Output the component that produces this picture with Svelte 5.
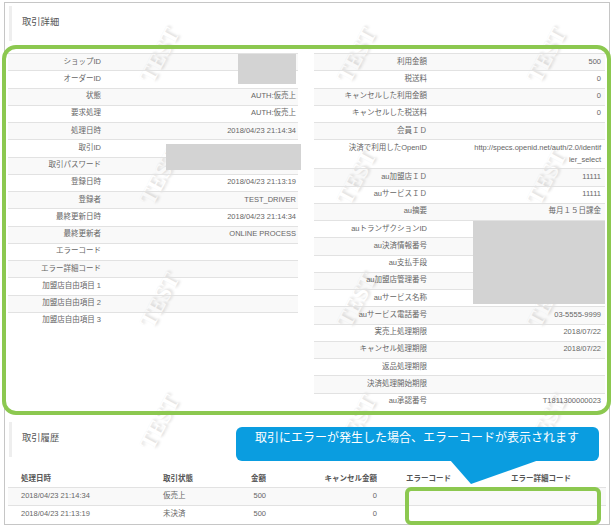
<script>
	const left = [
		['ショップID', ''],
		['オーダーID', ''],
		['状態', 'AUTH:仮売上'],
		['要求処理', 'AUTH:仮売上'],
		['処理日時', '2018/04/23 21:14:34'],
		['取引ID', ''],
		['取引パスワード', ''],
		['登録日時', '2018/04/23 21:13:19'],
		['登録者', 'TEST_DRIVER'],
		['最終更新日時', '2018/04/23 21:14:34'],
		['最終更新者', 'ONLINE PROCESS'],
		['エラーコード', ''],
		['エラー詳細コード', ''],
		['加盟店自由項目 1', ''],
		['加盟店自由項目 2', ''],
		['加盟店自由項目 3', '']
	];
	const right = [
		['利用金額', '500'],
		['税送料', '0'],
		['キャンセルした利用金額', '0'],
		['キャンセルした税送料', '0'],
		['会員ＩＤ', ''],
		['決済で利用したOpenID', 'http://specs.openid.net/auth/2.0/identifier_select'],
		['au加盟店ＩＤ', '11111'],
		['auサービスＩＤ', '11111'],
		['au摘要', '毎月１５日課金'],
		['auトランザクションID', ''],
		['au決済情報番号', ''],
		['au支払手段', ''],
		['au加盟店管理番号', ''],
		['auサービス名称', ''],
		['auサービス電話番号', '03-5555-9999'],
		['実売上処理期限', '2018/07/22'],
		['キャンセル処理期限', '2018/07/22'],
		['返品処理期限', ''],
		['決済処理開始期限', ''],
		['au承認番号', 'T1811300000023']
	];
	const history = [
		['2018/04/23 21:14:34', '仮売上', '500', '0'],
		['2018/04/23 21:13:19', '未決済', '500', '0']
	];
	const marks = [];
	for (const x of [125, 322, 512]) {
		for (const y of [41, 163, 286, 408]) marks.push({ x, y });
	}
</script>

<div class="panel">
	<div class="marks">
		{#each marks as m}
			<span class="mark" style="left: {m.x}px; top: {m.y}px">TEST</span>
		{/each}
	</div>

	<h2>取引詳細</h2>
	<div class="columns">
		<div class="kv kv-left">
			{#each left as [k, v]}
				<div class="row"><div class="k">{k}</div><div class="v">{v}</div></div>
			{/each}
		</div>
		<div class="kv kv-right">
			{#each right as [k, v]}
				<div class="row"><div class="k">{k}</div><div class="v">{v}</div></div>
			{/each}
		</div>
	</div>

	<h2 class="second">取引履歴</h2>
	<table>
		<thead>
			<tr>
				<th class="c1">処理日時</th>
				<th class="c2">取引状態</th>
				<th class="c3">金額</th>
				<th class="c4">キャンセル金額</th>
				<th class="c5">エラーコード</th>
				<th class="c6">エラー詳細コード</th>
			</tr>
		</thead>
		<tbody>
			{#each history as h}
				<tr>
					<td class="c1">{h[0]}</td>
					<td class="c2">{h[1]}</td>
					<td class="c3">{h[2]}</td>
					<td class="c4">{h[3]}</td>
					<td class="c5"></td>
					<td class="c6"></td>
				</tr>
			{/each}
		</tbody>
	</table>
</div>

<div class="mask m1"></div>
<div class="mask m2"></div>
<div class="mask m3"></div>

<div class="frame big"></div>
<div class="frame small"></div>

<div class="callout">取引にエラーが発生した場合、エラーコードが表示されます</div>
<svg class="tail" width="100" height="26" viewBox="0 0 100 26"><polygon points="0,0 21,24 89,0" fill="#0a9de0" /></svg>

<style>
	:global(body) {
		margin: 0;
		background: #fff;
		overflow: hidden;
	}

	:global(#app) {
		position: relative;
		width: 613px;
		height: 530px;
		overflow: hidden;
		font-family: "Liberation Sans", "Noto Sans CJK JP", sans-serif;
		font-size: 7.5px;
		color: #666;
	}

	.panel {
		position: relative;
		box-sizing: border-box;
		width: 606px;
		height: 523px;
		margin: 2px 0 0 4px;
		padding: 3px 3px 0;
		border: 1px solid #c6c6c6;
		background: #fff;
	}

	.marks {
		position: absolute;
		inset: 0;
		overflow: hidden;
	}

	.mark {
		position: absolute;
		font-family: "Liberation Serif", serif;
		font-weight: bold;
		font-size: 23px;
		line-height: 1;
		color: #fff;
		text-shadow: 1px 1px 2px #e4e4e4, 2px 2px 3px #e0e0e0;
		transform: rotate(-62deg);
	}

	h2 {
		position: relative;
		box-sizing: border-box;
		height: 35px;
		margin: 0 0 12px 1px;
		padding: 0 0 2px 10px;
		border-left: 3px solid #eee;
		font-size: 9.3px;
		font-weight: normal;
		line-height: 33px;
		color: #555;
	}

	.second {
		margin-bottom: 0;
	}

	.columns {
		position: relative;
		display: flex;
		gap: 16px;
		height: 357px;
		margin-bottom: 12px;
	}

	.kv {
		width: 290px;
	}

	.kv-right {
		width: 291px;
	}

	.row {
		display: grid;
		box-sizing: border-box;
		min-height: 17.25px;
		border-top: 1px solid #e2e2e2;
		line-height: 12px;
		padding: 1.5px 0 2.5px;
	}

	.row:nth-child(odd) {
		background: rgba(0, 0, 0, 0.025);
	}

	.kv-left .row {
		grid-template-columns: 93px 1fr;
	}

	.kv-right .row {
		grid-template-columns: 113px 1fr;
	}

	.k {
		text-align: right;
	}

	.v {
		text-align: right;
		word-break: break-all;
		padding-left: 46px;
	}

	.kv-left .v {
		padding-right: 2px;
	}

	.kv-right .v {
		padding-right: 4px;
	}

	table {
		position: relative;
		width: 598px;
		margin: 0;
		border-collapse: collapse;
		table-layout: fixed;
	}

	th {
		height: 30px;
		padding: 11px 0 0;
		font-weight: bold;
		font-size: 7.5px;
		color: #555;
		box-sizing: border-box;
	}

	td {
		height: 17px;
		padding: 0;
		border-top: 1px solid #e2e2e2;
		line-height: 10px;
	}

	tbody tr:nth-child(odd) {
		background: rgba(0, 0, 0, 0.025);
	}

	.c1 { width: 155px; padding-left: 13px; text-align: left; box-sizing: border-box; }
	.c2 { width: 65px; text-align: left; }
	.c3 { width: 38px; text-align: right; }
	.c4 { width: 111px; text-align: right; }
	.c5 { width: 74px; text-align: right; }
	.c6 { text-align: right; padding-right: 35px; box-sizing: border-box; }

	.mask {
		position: absolute;
		background: #d3d3d3;
	}

	.m1 { left: 238px; top: 54px; width: 58px; height: 30px; }
	.m2 { left: 166px; top: 144px; width: 135px; height: 26px; }
	.m3 { left: 473px; top: 221px; width: 132px; height: 83px; }

	.frame {
		position: absolute;
		box-sizing: border-box;
		border: 4px solid #8cc850;
	}

	.big {
		left: 2px;
		top: 45px;
		width: 609px;
		height: 370px;
		border-radius: 14px;
	}

	.small {
		left: 405px;
		top: 487px;
		width: 196px;
		height: 38px;
		border-radius: 6px;
	}

	.callout {
		position: absolute;
		box-sizing: border-box;
		left: 236px;
		top: 427px;
		width: 363px;
		height: 34px;
		padding: 3px 0 0 19px;
		border-radius: 6px;
		background: #0a9de0;
		color: #fff;
		font-size: 12px;
		line-height: 17px;
		white-space: nowrap;
	}

	.tail {
		position: absolute;
		left: 450px;
		top: 460px;
	}
</style>
